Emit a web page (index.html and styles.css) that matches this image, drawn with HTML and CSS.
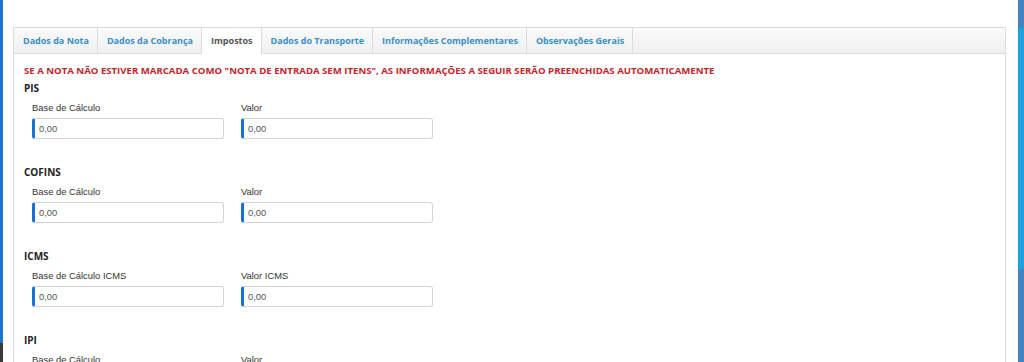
FILE: index.html
```html
<!DOCTYPE html>
<html lang="pt-BR">
<head>
<meta charset="utf-8">
<link rel="stylesheet" href="styles.css">
</head>
<body>
<div class="side-left"><div class="sl-top"></div><div class="sl-bottom"></div></div>
<main class="main">
  <div class="panel">
    <ul class="tabs">
      <li class="tab">Dados da Nota</li>
      <li class="tab">Dados da Cobrança</li>
      <li class="tab active">Impostos</li>
      <li class="tab">Dados do Transporte</li>
      <li class="tab">Informações Complementares</li>
      <li class="tab">Observações Gerais</li>
    </ul>
    <div class="panel-body">
      <p class="warning">SE A NOTA NÃO ESTIVER MARCADA COMO "NOTA DE ENTRADA SEM ITENS", AS INFORMAÇÕES A SEGUIR SERÃO PREENCHIDAS AUTOMATICAMENTE</p>
      <section class="tax">
        <h4 class="tax-title">PIS</h4>
        <div class="row">
          <div class="group"><label class="lbl">Base de Cálculo</label><div class="input">0,00</div></div>
          <div class="group"><label class="lbl">Valor</label><div class="input">0,00</div></div>
        </div>
      </section>
      <section class="tax">
        <h4 class="tax-title">COFINS</h4>
        <div class="row">
          <div class="group"><label class="lbl">Base de Cálculo</label><div class="input">0,00</div></div>
          <div class="group"><label class="lbl">Valor</label><div class="input">0,00</div></div>
        </div>
      </section>
      <section class="tax">
        <h4 class="tax-title">ICMS</h4>
        <div class="row">
          <div class="group"><label class="lbl">Base de Cálculo ICMS</label><div class="input">0,00</div></div>
          <div class="group"><label class="lbl">Valor ICMS</label><div class="input">0,00</div></div>
        </div>
      </section>
      <section class="tax">
        <h4 class="tax-title">IPI</h4>
        <div class="row">
          <div class="group"><label class="lbl">Base de Cálculo</label><div class="input">0,00</div></div>
          <div class="group"><label class="lbl">Valor</label><div class="input">0,00</div></div>
        </div>
      </section>
    </div>
  </div>
</main>
<div class="side-right"><div class="sr-a"></div><div class="sr-b"></div><div class="sr-c"></div></div>
</body>
</html>
```
FILE: styles.css
```css
html, body { margin: 0; padding: 0; height: 100%; overflow: hidden; background: #fff; }
body { display: flex; font-family: "Liberation Sans", Arial, sans-serif; }
.side-left { width: 3px; flex: none; display: flex; flex-direction: column; }
.sl-top { height: 343px; background: #1f73d2; }
.sl-bottom { flex: 1; background: #3a3a3a; }
.side-right { width: 6px; flex: none; display: flex; flex-direction: column; margin-left: 1px; }
.sr-a { height: 28px; background: #4582c2; }
.sr-b { height: 241px; background: #1ea2dc; }
.sr-c { flex: 1; background: #4582c2; }
.main { flex: 1; padding: 27px 11px 0 10px; min-width: 0; }
.panel { border: 1px solid #dcdcdc; border-bottom: none; height: 400px; }
.tabs { list-style: none; margin: 0; padding: 0; display: flex; height: 25px; background: linear-gradient(#fafafa, #f0f0f0); border-bottom: 1px solid #dcdcdc; }
.tab { font-family: "Open Sans", sans-serif; font-weight: 700; font-size: 9px; color: #3a8fc8; line-height: 25px; padding: 0 8px 0 9px; border-right: 1px solid #dcdcdc; white-space: nowrap; }
.tab.active { background: #fff; color: #555; height: 26px; }
.panel-body { padding: 10px 10px 0 10px; }
.warning { margin: 0; font-family: "Open Sans", sans-serif; font-weight: 700; font-size: 9.6px; line-height: 14px; color: #c3262b; }
.tax { margin-top: 3px; margin-bottom: 26px; }
.tax-title { margin: 0; font-family: "Open Sans", sans-serif; font-weight: 700; font-size: 10px; line-height: 14px; color: #222; }
.row { display: flex; gap: 17px; padding-left: 8px; margin-top: 6px; }
.group { width: 192px; }
.lbl { display: block; font-size: 9.4px; line-height: 14px; color: #333; margin-bottom: 3px; }
.input { box-sizing: border-box; height: 21px; border: 1px solid #d4d4d4; border-left: 3px solid #1a6fd8; border-radius: 3px; font-size: 9.4px; line-height: 19px; padding-left: 4px; color: #555; }
```
